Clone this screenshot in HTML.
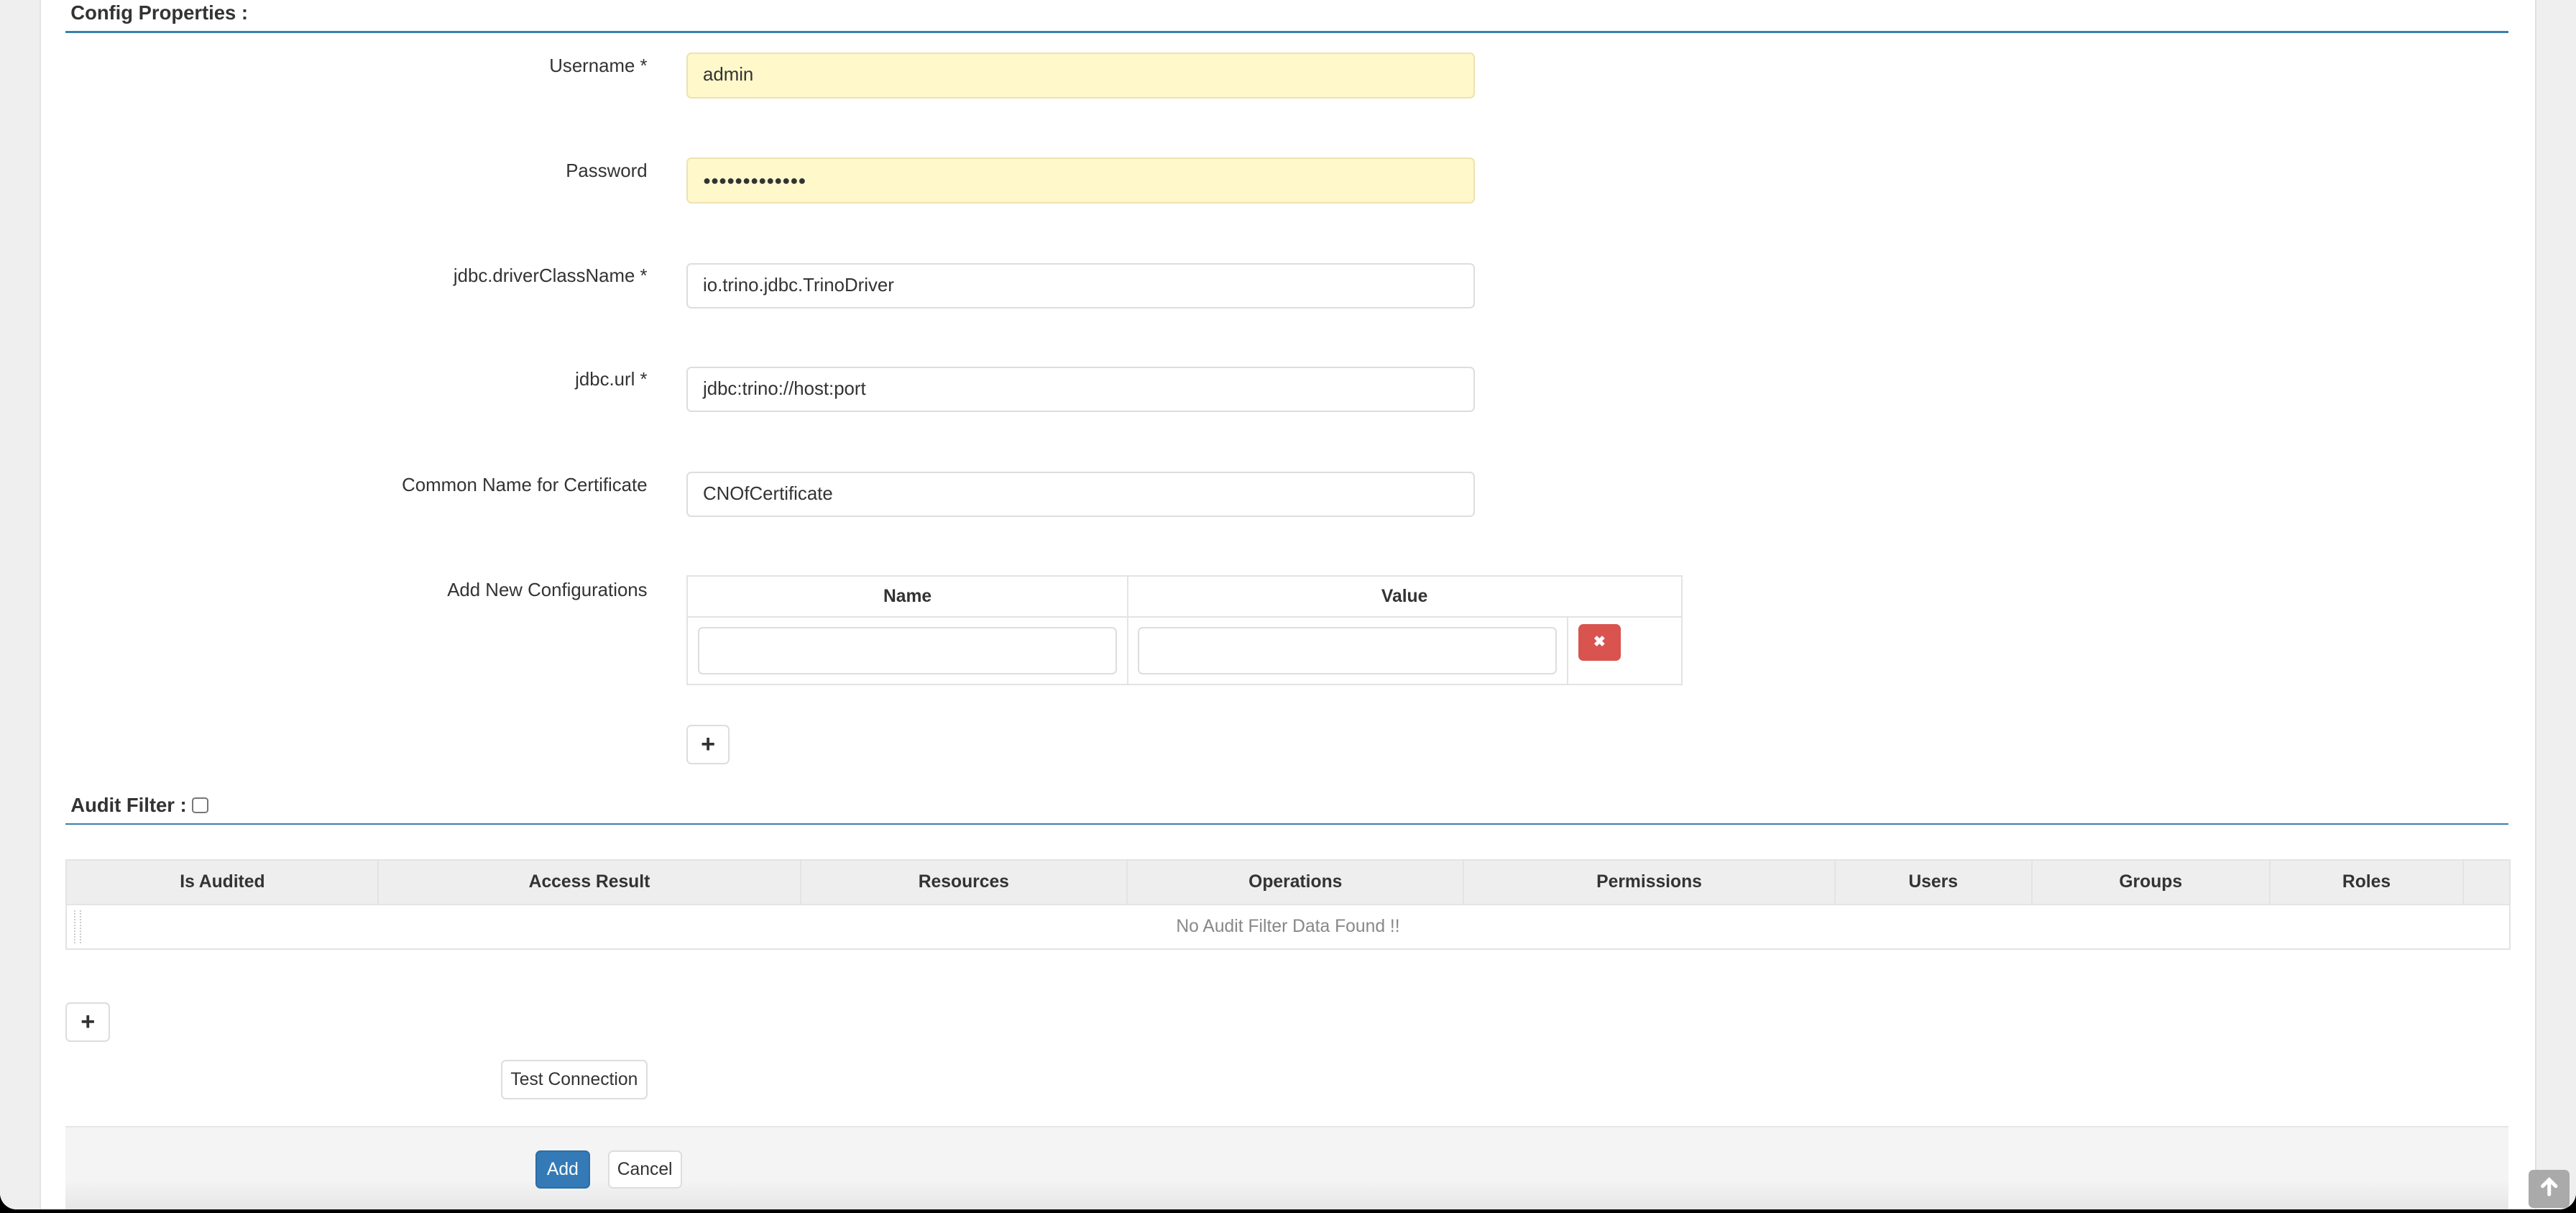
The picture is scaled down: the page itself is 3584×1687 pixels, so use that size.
<!DOCTYPE html>
<html><head><meta charset="utf-8"><style>
html,body{margin:0;padding:0;background:#000;}
#w{zoom:2.285714;width:1568px;height:738px;position:relative;overflow:hidden;background:#000;font-family:"Liberation Sans",Arial,sans-serif;color:#333;font-size:11.3px;}
#pg{position:absolute;left:0;top:0;width:1568px;height:736px;background:#fff;border-radius:0 0 10px 10px;overflow:hidden;}
.a{position:absolute;}
.lbl{position:absolute;right:1174px;text-align:right;font-size:11.3px;color:#333;white-space:nowrap;}
.inp{position:absolute;left:418px;height:26px;border:1px solid #ddd;border-radius:3px;background:#fff;font-size:11.3px;line-height:26px;padding-left:9px;box-sizing:content-box;width:469px;}
.y{background:#fef8cb;border-color:#eee2b0;}
.h{position:absolute;left:43px;font-weight:bold;font-size:12px;color:#333;}
.line{position:absolute;left:40px;width:1487px;height:1px;background:#3a7fae;}
.btn{position:absolute;border:1px solid #ddd;border-radius:3px;background:#fff;text-align:center;font-size:10.8px;box-sizing:border-box;}
table{border-collapse:collapse;position:absolute;}
td,th{border:1px solid #e3e3e3;padding:0;}
th{font-size:10.8px;}
</style></head><body><div id="w"><div id="pg">
<div class="a" style="left:0;top:0;width:24px;height:738px;background:#efefef;border-right:1px solid #e2e2e2"></div>
<div class="a" style="left:1543px;top:0;width:25px;height:738px;background:#efefef;border-left:1px solid #e0e0e0"></div>

<div class="h" style="top:1px">Config Properties :</div>
<div class="line" style="top:19px"></div>

<div class="lbl" style="top:34px">Username *</div>
<div class="inp y" style="top:32px">admin</div>
<div class="lbl" style="top:98px">Password</div>
<div class="inp y" style="top:96px;font-size:8px;letter-spacing:0px">●●●●●●●●●●●●●</div>
<div class="lbl" style="top:162px">jdbc.driverClassName *</div>
<div class="inp" style="top:160px">io.trino.jdbc.TrinoDriver</div>
<div class="lbl" style="top:225px">jdbc.url *</div>
<div class="inp" style="top:223px">jdbc:trino://host:port</div>
<div class="lbl" style="top:289px">Common Name for Certificate</div>
<div class="inp" style="top:287px">CNOfCertificate</div>
<div class="lbl" style="top:353px">Add New Configurations</div>

<table style="left:418px;top:350px;width:606px">
<tr style="height:25px"><th style="width:267px">Name</th><th colspan="2">Value</th></tr>
<tr style="height:41px"><td><div style="margin:0 6px;height:27px;border:1px solid #ddd;border-radius:3px"></div></td><td style="width:267px"><div style="margin:0 6px;height:27px;border:1px solid #ddd;border-radius:3px"></div></td><td><div style="margin:-10px 0 0 6px;width:26px;height:22px;background:#d9534f;border-radius:3px;color:#fff;text-align:center;line-height:22px;font-size:9px;font-weight:bold">✖</div></td></tr>
</table>
<div class="btn" style="left:418px;top:441px;width:26px;height:24px;line-height:22px;font-size:15px;font-weight:bold">+</div>

<div class="h" style="top:483px">Audit Filter : <span style="display:inline-block;width:8px;height:8px;border:1px solid #777;border-radius:2px;vertical-align:-1px"></span></div>
<div class="line" style="top:501px"></div>

<table style="left:40px;top:523px;width:1488px;border:1px solid #ddd">
<tr style="height:27px;background:#eee"><th style="width:189px">Is Audited</th><th style="width:256px">Access Result</th><th style="width:198px">Resources</th><th style="width:204px">Operations</th><th style="width:225px">Permissions</th><th style="width:119px">Users</th><th style="width:144px">Groups</th><th style="width:117px">Roles</th><th></th></tr>
<tr style="height:27px"><td colspan="9" style="text-align:center;color:#888;font-size:10.8px;position:relative"><span style="position:absolute;left:4px;top:3px;width:3px;height:20px;border-left:1px dotted #ccc;border-right:1px dotted #ccc"></span>No Audit Filter Data Found !!</td></tr>
</table>

<div class="btn" style="left:40px;top:610px;width:27px;height:24px;line-height:22px;font-size:15px;font-weight:bold">+</div>
<div class="btn" style="left:305px;top:645px;width:89px;height:24px;line-height:23px">Test Connection</div>

<div class="a" style="left:40px;top:685px;width:1487px;height:53px;background:linear-gradient(#f4f4f4 60%,#e4e4e4);border-top:1px solid #e6e6e6"></div>
<div class="btn" style="left:326px;top:700px;width:33px;height:23px;line-height:22px;background:#337ab7;border-color:#2e6da4;color:#fff">Add</div>
<div class="btn" style="left:370px;top:700px;width:45px;height:23px;line-height:22px">Cancel</div>

<div class="a" style="left:1539px;top:712px;width:25px;height:23px;background:#aaa;border-radius:3px;color:#fff;text-align:center;line-height:22px;font-size:13px;font-weight:bold">
<svg width="12" height="12" viewBox="0 0 12 12" style="vertical-align:-1px"><path d="M6 11V2M2 6l4-4 4 4" stroke="#fff" stroke-width="2.2" fill="none" stroke-linecap="round"/></svg></div>
</div></div></body></html>
